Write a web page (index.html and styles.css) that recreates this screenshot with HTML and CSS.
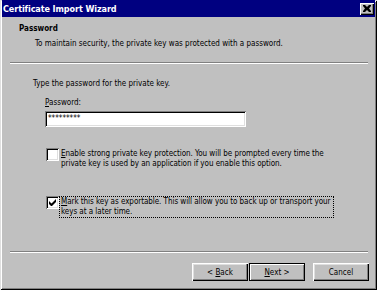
FILE: index.html
```html
<!DOCTYPE html>
<html>
<head>
<meta charset="utf-8">
<link rel="stylesheet" href="styles.css">
</head>
<body>
<div class="window">
  <div class="titlebar">
    <span class="title">Certificate Import Wizard</span>
    <span class="close"><svg width="8" height="7" viewBox="0 0 8 7"><path d="M0 0h2l2 2 2-2h2v1L6 3.5 8 6v1H6L4 5 2 7H0V6l2-2.5L0 1z" fill="#000"/></svg></span>
  </div>
  <div class="header">
    <div class="h-title">Password</div>
    <div class="h-sub">To maintain security, the private key was protected with a password.</div>
  </div>
  <div class="sep"></div>
  <div class="content">
    <div class="intro">Type the password for the private key.</div>
    <div class="label"><u>P</u>assword:</div>
    <div class="input">*********</div>
    <div class="check first">
      <span class="box"></span>
      <span class="ctext"><u>E</u>nable strong private key protection. You will be prompted every time the private key is used by an application if you enable this option.</span>
    </div>
    <div class="check second">
      <span class="box"><svg width="7" height="7" viewBox="0 0 7 7"><path d="M0 2v3l2 2h1l4-4V0L2.5 4.5z" fill="#000"/></svg></span>
      <span class="ctext focus"><u>M</u>ark this key as exportable. This will allow you to back up or transport your keys at a later time.</span>
    </div>
  </div>
  <div class="sep bottom"></div>
  <div class="buttons">
    <button class="btn">&lt; <u>B</u>ack</button>
    <button class="btn default"><u>N</u>ext &gt;</button>
    <button class="btn cancel">Cancel</button>
  </div>
</div>
</body>
</html>
```

FILE: styles.css
```css
html, body {
  margin: 0;
  padding: 0;
  background: #c0c0c0;
}
body {
  font-family: "DejaVu Sans Condensed", "Liberation Sans", Arial, sans-serif;
  font-size: 8px;
  color: #000;
}
.window {
  width: 377px;
  height: 290px;
  box-sizing: border-box;
  padding: 0 2px 2px 2px;
  background: #c0c0c0;
  box-shadow: inset 1px 1px #dfdfdf, inset -1px -1px #000, inset 2px 2px #fff, inset -2px -2px #808080;
  display: flex;
  flex-direction: column;
}
.titlebar {
  height: 17px;
  background: #000080;
  display: flex;
  align-items: center;
  justify-content: space-between;
  padding: 0 1px 0 1px;
}
.title {
  color: #fff;
  font-weight: bold;
  font-size: 9px;
  letter-spacing: -0.1px;
}
.close {
  width: 14px;
  height: 12px;
  box-sizing: border-box;
  background: #c0c0c0;
  box-shadow: inset 1px 1px #fff, inset -1px -1px #000, inset -2px -2px #808080;
  display: flex;
  align-items: center;
  justify-content: center;
}
.header {
  padding: 7px 0 0 17px;
  height: 38px;
  box-sizing: border-box;
}
.h-title {
  font-weight: bold;
  line-height: 10px;
}
.h-sub {
  margin-top: 5px;
  padding-left: 16px;
  line-height: 10px;
}
.sep {
  margin: 7px 7px 0 8px;
  border-top: 1px solid #808080;
  border-bottom: 1px solid #fff;
  height: 0;
}
.content {
  padding: 15px 0 0 31px;
  flex: 1;
}
.intro {
  line-height: 10px;
}
.label {
  margin: 9px 0 0 12px;
  line-height: 10px;
}
.input {
  margin: 3px 0 0 12px;
  width: 201px;
  height: 16px;
  box-sizing: border-box;
  background: #fff;
  box-shadow: inset 1px 1px #808080, inset -1px -1px #fff, inset 2px 2px #000, inset -2px -2px #dfdfdf;
  padding: 3px 0 0 3px;
  line-height: 10px;
  font-size: 8px;
}
.check {
  display: flex;
  align-items: flex-start;
  margin-left: 13px;
}
.check.first {
  margin-top: 21px;
}
.check.second {
  margin-top: 27px;
}
.box {
  width: 13px;
  height: 13px;
  flex: none;
  box-sizing: border-box;
  background: #fff;
  box-shadow: inset 1px 1px #808080, inset -1px -1px #fff, inset 2px 2px #000, inset -2px -2px #dfdfdf;
  display: flex;
  align-items: center;
  justify-content: center;
}
.ctext {
  margin-left: 1px;
  padding: 0 0 0 1px;
  line-height: 10px;
  width: 272px;
  margin-top: 1px;
  letter-spacing: -0.05px;
}
.ctext.focus {
  outline: 1px dotted #000;
  outline-offset: 0;
}
.buttons {
  display: flex;
  justify-content: flex-end;
  padding: 10px 6px 7px 0;
}
.btn {
  font-family: inherit;
  font-size: 8px;
  width: 56px;
  height: 18px;
  padding: 0;
  margin: 0;
  border: 0;
  background: #c0c0c0;
  color: #000;
  box-shadow: inset 1px 1px #fff, inset -1px -1px #000, inset -2px -2px #808080, inset 2px 2px #dfdfdf;
}
.btn.default {
  margin-left: 1px;
  box-shadow: inset 0 0 0 1px #000, inset 2px 2px #fff, inset -2px -2px #808080;
}
.btn.cancel {
  margin-left: 8px;
}
```
